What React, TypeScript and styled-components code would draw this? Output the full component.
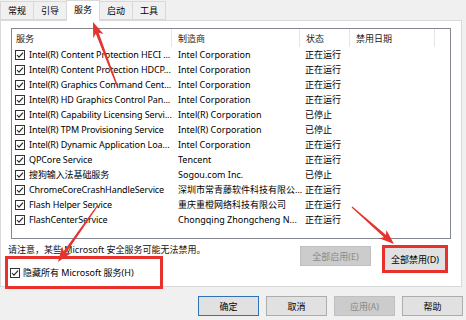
import React from "react";
import styled, { createGlobalStyle } from "styled-components";

type Service = { name: string; maker: string; status: string };

const services: Service[] = [
  { name: "Intel(R) Content Protection HECI ...", maker: "Intel Corporation", status: "正在运行" },
  { name: "Intel(R) Content Protection HDCP...", maker: "Intel Corporation", status: "正在运行" },
  { name: "Intel(R) Graphics Command Cent...", maker: "Intel Corporation", status: "正在运行" },
  { name: "Intel(R) HD Graphics Control Pan...", maker: "Intel Corporation", status: "正在运行" },
  { name: "Intel(R) Capability Licensing Servi...", maker: "Intel(R) Corporation", status: "已停止" },
  { name: "Intel(R) TPM Provisioning Service", maker: "Intel(R) Corporation", status: "已停止" },
  { name: "Intel(R) Dynamic Application Loa...", maker: "Intel Corporation", status: "正在运行" },
  { name: "QPCore Service", maker: "Tencent", status: "正在运行" },
  { name: "搜狗输入法基础服务", maker: "Sogou.com Inc.", status: "已停止" },
  { name: "ChromeCoreCrashHandleService", maker: "深圳市常青藤软件科技有限公...", status: "正在运行" },
  { name: "Flash Helper Service", maker: "重庆重橙网络科技有限公司", status: "正在运行" },
  { name: "FlashCenterService", maker: "Chongqing Zhongcheng N...", status: "正在运行" },
];

const tabs = ["常规", "引导", "服务", "启动", "工具"];

// polygon for a hand-drawn style red arrow, tip first
function arrowPoints(tx: number, ty: number, sx: number, sy: number): string {
  const dx = sx - tx;
  const dy = sy - ty;
  const len = Math.hypot(dx, dy);
  const ux = dx / len;
  const uy = dy / len;
  const px = -uy;
  const py = ux;
  const head = 15;
  const half = 5.5;
  const bx = tx + ux * head;
  const by = ty + uy * head;
  const nx = tx + ux * (head - 3);
  const ny = ty + uy * (head - 3);
  const pts = [
    [tx, ty],
    [bx + px * half, by + py * half],
    [nx + px * 1.5, ny + py * 1.5],
    [sx + px * 0.6, sy + py * 0.6],
    [sx - px * 0.6, sy - py * 0.6],
    [nx - px * 1.5, ny - py * 1.5],
    [bx - px * half, by - py * half],
  ];
  return pts.map((p) => `${p[0].toFixed(1)},${p[1].toFixed(1)}`).join(" ");
}

const CheckBox: React.FC = () => (
  <CheckSvg width="10" height="10" viewBox="0 0 10 10">
    <rect x="0.5" y="0.5" width="9" height="9" fill="#fff" stroke="#333" />
    <polyline points="2,5 4,7.2 8,2.6" fill="none" stroke="#222" strokeWidth="1.1" />
  </CheckSvg>
);

const App: React.FC = () => {
  return (
    <Window>
      <GlobalStyle />
      <TabStrip>
        {tabs.map((t) => (
          <Tab key={t} $active={t === "服务"}>
            {t}
          </Tab>
        ))}
      </TabStrip>
      <Panel>
        <ListBox>
          <HeaderRow>
            <HeaderCell $first>服务</HeaderCell>
            <HeaderCell>制造商</HeaderCell>
            <HeaderCell>状态</HeaderCell>
            <HeaderCell>禁用日期</HeaderCell>
            <HeaderCell $last />
          </HeaderRow>
          {services.map((s) => (
            <Row key={s.name}>
              <NameCell>
                <CheckBox />
                <span>{s.name}</span>
              </NameCell>
              <Cell>{s.maker}</Cell>
              <Cell $pad={5}>{s.status}</Cell>
              <Cell />
              <Cell />
            </Row>
          ))}
        </ListBox>
        <Lower>
          <LeftCol>
            <Note>请注意，某些 Microsoft 安全服务可能无法禁用。</Note>
            <Highlight $wide>
              <CheckLabel>
                <CheckBox />
                <span>隐藏所有 Microsoft 服务(H)</span>
              </CheckLabel>
            </Highlight>
          </LeftCol>
          <RightCol>
            <Button $disabled $w={71} $h={20}>
              全部启用(E)
            </Button>
            <Highlight>
              <Button $w={60} $h={22} $plain>
                全部禁用(D)
              </Button>
            </Highlight>
          </RightCol>
        </Lower>
      </Panel>
      <Footer>
        <Button $default $w={61} $h={20}>
          确定
        </Button>
        <Button $w={61} $h={20}>
          取消
        </Button>
        <Button $disabled $w={61} $h={20}>
          应用(A)
        </Button>
        <Button $w={61} $h={20}>
          帮助
        </Button>
      </Footer>
      <Annotations width="466" height="320" viewBox="0 0 466 320">
        <polygon points={arrowPoints(93, 22, 118, 88)} />
        <polygon points={arrowPoints(58, 262, 98, 205)} />
        <polygon points={arrowPoints(394, 244, 352, 207)} />
      </Annotations>
    </Window>
  );
};

const GlobalStyle = createGlobalStyle`
  html, body {
    margin: 0;
    padding: 0;
    background: #f0f0f0;
  }
  body {
    font-family: "Noto Sans", "Noto Sans CJK SC", sans-serif;
    font-size: 9px;
    color: #000;
  }
`;

const Window = styled.div`
  position: relative;
  width: 466px;
  height: 320px;
  overflow: hidden;
  background: #f0f0f0;
  display: flex;
  flex-direction: column;
`;

const TabStrip = styled.div`
  display: flex;
  align-items: flex-end;
  height: 20px;
  position: relative;
  z-index: 1;
`;

const Tab = styled.div<{ $active?: boolean }>`
  box-sizing: border-box;
  width: 34px;
  height: ${(p) => (p.$active ? 21 : 19)}px;
  margin-bottom: ${(p) => (p.$active ? -1 : 0)}px;
  margin-right: -1px;
  display: flex;
  align-items: center;
  justify-content: center;
  padding-bottom: ${(p) => (p.$active ? 3 : 1)}px;
  background: ${(p) => (p.$active ? "#fff" : "#f0f0f0")};
  border: 1px solid #d9d9d9;
  border-bottom: ${(p) => (p.$active ? "none" : "1px solid #d9d9d9")};
`;

const Panel = styled.div`
  box-sizing: border-box;
  width: 462px;
  height: 267px;
  background: #fff;
  border: 1px solid #d9d9d9;
  padding: 7px 10px 0 10px;
`;

const ListBox = styled.div`
  box-sizing: border-box;
  height: 211px;
  border: 1px solid #828790;
  background: #fff;
`;

const columns = "160px 128px 50px 85px 1fr";

const HeaderRow = styled.div`
  display: grid;
  grid-template-columns: ${columns};
  height: 18px;
`;

const HeaderCell = styled.div<{ $first?: boolean; $last?: boolean }>`
  display: flex;
  align-items: center;
  padding-left: ${(p) => (p.$first ? 4 : 6)}px;
  border-right: ${(p) => (p.$last ? "none" : "1px solid #e5e5e5")};
  color: #222;
`;

const Row = styled.div`
  display: grid;
  grid-template-columns: ${columns};
  height: 15px;
  align-items: center;
`;

const Cell = styled.div<{ $pad?: number }>`
  padding-left: ${(p) => p.$pad ?? 6}px;
  white-space: nowrap;
`;

const NameCell = styled.div`
  display: flex;
  align-items: center;
  gap: 4px;
  padding-left: 3px;
  white-space: nowrap;
  letter-spacing: -0.1px;
`;

const CheckSvg = styled.svg`
  flex: none;
  display: block;
`;

const Lower = styled.div`
  display: grid;
  grid-template-columns: 1fr auto;
  align-items: start;
  margin: 5px 0 0 -6px;
`;

const LeftCol = styled.div`
  display: flex;
  flex-direction: column;
  align-items: flex-start;
`;

const Note = styled.div`
  height: 12px;
  line-height: 12px;
  padding-left: 3px;
  color: #111;
`;

const Highlight = styled.div<{ $wide?: boolean }>`
  box-sizing: border-box;
  border: 3px solid #e8312c;
  ${(p) =>
    p.$wide
      ? `
    width: 158px;
    height: 33px;
    display: flex;
    align-items: center;
    padding-left: 2px;
  `
      : `margin-top: -1px;`}
`;

const CheckLabel = styled.div`
  display: flex;
  align-items: center;
  gap: 3px;
`;

const RightCol = styled.div`
  display: flex;
  align-items: flex-start;
  gap: 11px;
  padding-top: 2px;
  margin-right: 3px;
`;

const Button = styled.div<{
  $w: number;
  $h: number;
  $disabled?: boolean;
  $default?: boolean;
  $plain?: boolean;
}>`
  box-sizing: border-box;
  width: ${(p) => p.$w}px;
  height: ${(p) => p.$h}px;
  display: flex;
  align-items: center;
  justify-content: center;
  background: ${(p) => (p.$disabled ? "#cccccc" : "#e1e1e1")};
  color: ${(p) => (p.$disabled ? "#8a8a8a" : "#000")};
  border: 1px solid
    ${(p) => (p.$default ? "#2e73b8" : p.$disabled ? "#bfbfbf" : "#adadad")};
  ${(p) => (p.$plain ? "border-color: #e1e1e1;" : "")}
`;

const Footer = styled.div`
  display: flex;
  justify-content: flex-end;
  gap: 7px;
  margin-top: 9px;
  padding-right: 3px;
`;

const Annotations = styled.svg`
  position: absolute;
  left: 0;
  top: 0;
  pointer-events: none;
  fill: #e5332d;
`;

export default App;
